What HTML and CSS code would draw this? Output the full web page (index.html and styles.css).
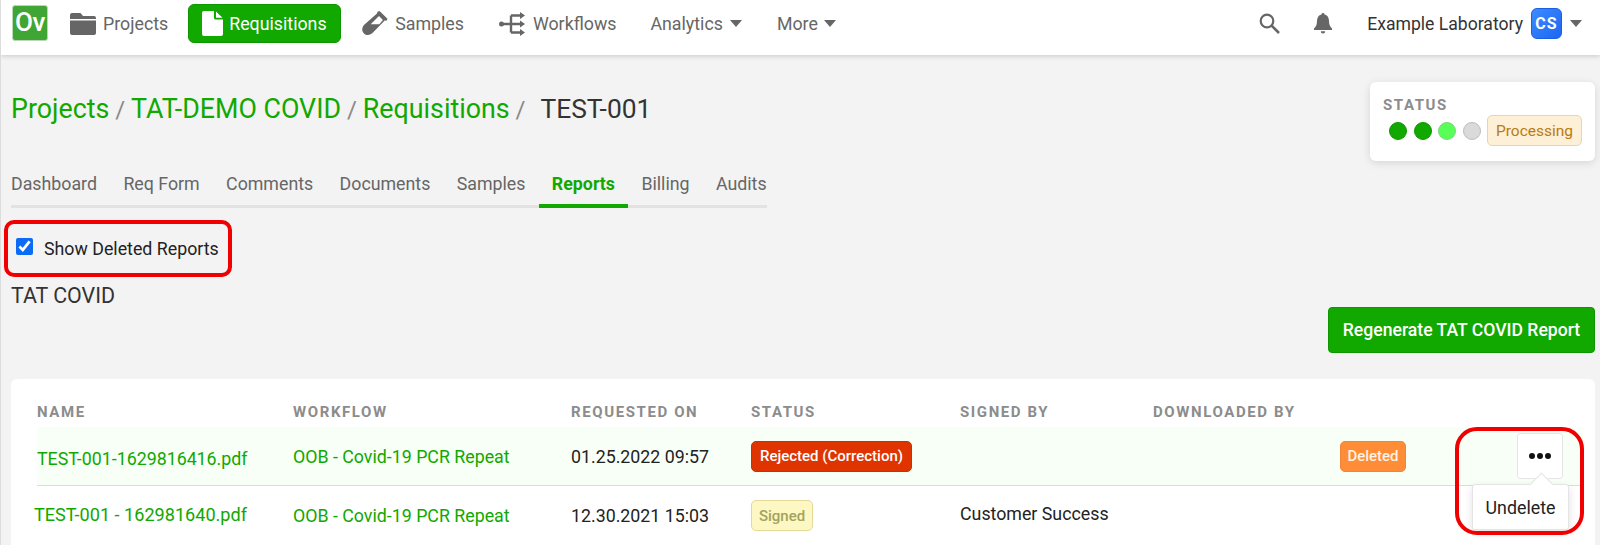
FILE: index.html
```html
<!DOCTYPE html>
<html lang="en">
<head>
<meta charset="utf-8">
<title>TEST-001 Reports</title>
<link rel="stylesheet" href="styles.css">
</head>
<body>
<div class="page">
  <nav class="nav">
    <div class="logo">Ov</div>
    <a class="nav-item nav-projects">
      <svg class="ic-folder" viewBox="0 0 26 22"><path d="M2 0h8.500l2.500 3h11a2 2 0 0 1 2 2v1H0V2a2 2 0 0 1 2-2zM0 7.500h26V20a2 2 0 0 1-2 2H2a2 2 0 0 1-2-2z"/></svg>
      <span>Projects</span>
    </a>
    <a class="nav-item nav-active">
      <svg class="ic-doc" viewBox="0 0 21 25"><path d="M2 0h10v7a1.500 1.500 0 0 0 1.500 1.500H21V23a2 2 0 0 1-2 2H2a2 2 0 0 1-2-2V2a2 2 0 0 1 2-2zM14 0.500L20.500 6.800H14z"/></svg>
      <span>Requisitions</span>
    </a>
    <a class="nav-item nav-samples">
      <svg class="ic-tube" viewBox="0 0 26 25"><path d="M15.500 0.800l2-0.800 8 7.800-1 2-1.800-0.300L11 21.500c-2.500 2.800-6.300 3.500-9 1-2.800-2.800-2-6.500 0.500-9L15 2.500zM17 5L8.700 13.300h8.600l3.600-4.400z"/></svg>
      <span>Samples</span>
    </a>
    <a class="nav-item nav-workflows">
      <svg class="ic-flow" viewBox="0 0 26 26"><circle cx="2.500" cy="13" r="2.500"/><path d="M2 13h21M12 4.500v17M12 4.500h10M12 21.500h10" fill="none" stroke="#666" stroke-width="2.400"/><path d="M21 1l5 3.500-5 3.500zM21 9.500l5 3.500-5 3.500zM21 18l5 3.500-5 3.500z"/></svg>
      <span>Workflows</span>
    </a>
    <a class="nav-item nav-analytics"><span>Analytics</span><i class="caret"></i></a>
    <a class="nav-item nav-more"><span>More</span><i class="caret"></i></a>
    <div class="nav-right">
      <svg class="ic-search" viewBox="0 0 21 21"><circle cx="8" cy="8" r="6.300" fill="none" stroke="#666" stroke-width="2.200"/><path d="M12.600 12.600L20 20" stroke="#666" stroke-width="2.600" fill="none"/></svg>
      <svg class="ic-bell" viewBox="0 0 18 21"><path d="M9 0a1.500 1.500 0 0 1 1.500 1.600C13.500 2.300 15 5 15 8c0 4 1 5.500 3 7.500V17H0v-1.500C2 13.500 3 12 3 8c0-3 1.500-5.700 4.500-6.400A1.500 1.500 0 0 1 9 0zM6.800 18.200h4.400a2.200 2.200 0 0 1-4.400 0z"/></svg>
      <span class="lab">Example Laboratory</span>
      <span class="avatar">CS</span>
      <i class="caret"></i>
    </div>
  </nav>

  <main class="main">
    <header class="head">
      <div class="crumbs">
        <a>Projects</a><span class="sep"> / </span><a>TAT-DEMO COVID</a><span class="sep"> / </span><a>Requisitions</a><span class="sep"> / </span><span class="crumb-current">TEST-001</span>
      </div>
      <aside class="status-card">
        <div class="status-label">STATUS</div>
        <div class="status-row">
          <i class="dot dot-done"></i><i class="dot dot-done"></i><i class="dot dot-now"></i><i class="dot dot-todo"></i>
          <span class="badge badge-processing">Processing</span>
        </div>
      </aside>
    </header>

    <div class="tabs">
      <a class="tab tab-first">Dashboard</a>
      <a class="tab">Req Form</a>
      <a class="tab">Comments</a>
      <a class="tab">Documents</a>
      <a class="tab">Samples</a>
      <a class="tab tab-active">Reports</a>
      <a class="tab">Billing</a>
      <a class="tab tab-last">Audits</a>
    </div>

    <label class="show-deleted"><input type="checkbox" checked><span>Show Deleted Reports</span></label>
    <h2 class="section-title">TAT COVID</h2>
    <div class="actions"><button class="btn-primary">Regenerate TAT COVID Report</button></div>

    <section class="card">
      <div class="grid grid-head">
        <span>NAME</span><span>WORKFLOW</span><span>REQUESTED ON</span><span>STATUS</span><span>SIGNED BY</span><span>DOWNLOADED BY</span>
      </div>
      <div class="grid row row-deleted">
        <a class="link name-a">TEST-001-1629816416.pdf</a>
        <a class="link">OOB - Covid-19 PCR Repeat</a>
        <span>01.25.2022 09:57</span>
        <span><span class="badge badge-rejected">Rejected (Correction)</span></span>
        <span></span>
        <span></span>
        <span><span class="badge badge-deleted">Deleted</span></span>
        <button class="more-btn"><i></i><i></i><i></i></button>
      </div>
      <div class="grid row">
        <a class="link name-b">TEST-001 - 162981640.pdf</a>
        <a class="link">OOB - Covid-19 PCR Repeat</a>
        <span>12.30.2021 15:03</span>
        <span><span class="badge badge-signed">Signed</span></span>
        <span class="lift">Customer Success</span>
        <span></span>
      </div>
    </section>
  </main>

  <div class="popover">Undelete</div>
  <div class="mark mark-check"></div>
  <div class="mark mark-menu"></div>
</div>
</body>
</html>
```
FILE: styles.css
```css
* { box-sizing: border-box; }
html, body { margin: 0; height: 100%; }
body {
  font-family: Roboto, "Liberation Sans", sans-serif;
  background: #f3f3f3;
  color: #222;
  overflow: hidden;
}
.page { position: relative; height: 545px; overflow: hidden; border-left: 1px solid #dcdcdc; }

/* top bar */
.nav {
  display: flex;
  align-items: center;
  height: 55px;
  background: #fff;
  box-shadow: 0 1px 5px rgba(0,0,0,.18);
  padding-left: 11px;
  font-size: 17.800px;
  color: #666;
  position: relative;
}
.logo {
  width: 36px; height: 36px;
  margin-top: -9px;
  background: #3fa535;
  border: 1px solid #b9d8b5;
  border-radius: 3px;
  color: #fff;
  font-size: 26px;
  font-weight: 500;
  line-height: 33px;
  text-align: center;
  letter-spacing: -.5px;
  overflow: hidden;
}
.nav-item { display: flex; align-items: center; height: 39px; margin-top: -8px; }
.nav-item svg { fill: #666; flex: none; }
.nav-projects { margin-left: 22px; gap: 7px; }
.ic-folder { width: 26px; height: 22px; }
.nav-active {
  margin-left: 20px;
  width: 153px;
  padding-left: 13px;
  gap: 6px;
  background: #11a800;
  border: 1px solid #0e9600;
  border-radius: 6px;
  color: #fff;
}
.nav-item.nav-active svg { fill: #fff; }
.ic-doc { width: 21px; height: 25px; }
.nav-samples { margin-left: 21px; gap: 7px; }
.ic-tube { width: 26px; height: 25px; }
.nav-workflows { margin-left: 35px; gap: 8px; }
.ic-flow { width: 26px; height: 26px; }
.nav-analytics { margin-left: 34px; gap: 7px; }
.nav-more { margin-left: 35px; gap: 6px; }
.caret {
  display: inline-block;
  width: 0; height: 0;
  border-left: 6.500px solid transparent;
  border-right: 6.500px solid transparent;
  border-top: 7px solid #666;
}
.nav-right { margin-left: auto; display: flex; align-items: center; height: 39px; margin-top: -8px; padding-right: 18px; }
.ic-search { width: 21px; height: 21px; }
.ic-bell { width: 18px; height: 21px; margin-left: 34px; fill: #666; }
.lab { margin-left: 35px; color: #333; font-size: 17.600px; }
.avatar {
  margin-left: 8px;
  width: 31px; height: 31px;
  border: 1px solid #1a5fe0;
  border-radius: 6px;
  background: linear-gradient(135deg, #3d8bff, #1c66f2);
  color: #fff;
  font-size: 16px;
  font-weight: 700;
  letter-spacing: 1px;
  line-height: 29px;
  text-align: center;
}
.nav-right .caret { margin-left: 8px; }

/* main */
.main { padding: 0 5px 0 10px; }
.head { display: flex; justify-content: space-between; align-items: flex-start; padding-top: 27px; height: 106px; }
.crumbs { padding-top: 11px; font-size: 26.800px; line-height: 32px; }
.crumbs a { color: #11a800; }
.sep { color: #8a8a8a; font-size: 24px; }
.crumb-current { color: #333; margin-left: 9px; font-size: 26.400px; }
.status-card {
  width: 225px; height: 79px;
  background: #fff;
  border-radius: 6px;
  box-shadow: 0 2px 8px rgba(0,0,0,.12);
  padding: 14px 13px;
}
.status-label, .grid-head {
  font-size: 15px;
  font-weight: 700;
  letter-spacing: 1.600px;
  color: #8c8c8c;
}
.status-label { line-height: 18px; }
.status-row { display: flex; align-items: center; margin-top: 1px; padding-left: 6px; gap: 6.500px; height: 31px; }
.dot { width: 18px; height: 18px; border-radius: 50%; flex: none; }
.dot-done { background: #11a800; border: 1px solid #0e9a00; }
.dot-now { background: #57ff57; border: 1px solid #7bd87b; }
.dot-todo { background: #dadada; border: 1px solid #bdbdbd; }

.badge {
  display: inline-flex;
  align-items: center;
  justify-content: center;
  height: 31px;
  border-radius: 5px;
  font-size: 15px;
  border: 1px solid transparent;
}
.badge-processing { width: 96px; background: #fdf0d6; border-color: #e8d6ab; color: #b87b12; font-size: 15.500px; }
.badge-rejected { width: 161px; background: #e03400; border-color: #c93000; color: #fff; font-weight: 500; }
.badge-deleted { width: 66px; background: #ff8c37; border-color: #f0853a; color: #fff3e6; font-weight: 500; }
.badge-signed { width: 62px; background: #fdf7c3; border-color: #e2da96; color: #a3a35c; font-weight: 500; }

/* tabs */
.tabs { display: flex; font-size: 17.800px; color: #666; width: max-content; }
.tab { padding: 11px 13.200px 9px; line-height: 24px; border-bottom: 3px solid #e2e2e2; }
.tab-first { padding-left: 0; }
.tab-last { padding-right: 0; }
.tab-active { color: #11a800; font-weight: 700; border-bottom: 4px solid #11a800; padding-bottom: 8px; }

.show-deleted { display: flex; align-items: center; margin: 28px 0 0 5px; height: 24px; font-size: 17.800px; color: #222; }
.show-deleted input { width: 17px; height: 17px; margin: 0 11px 4px 0; accent-color: #0b6bf5; }
.section-title { margin: 25px 0 0; font-size: 21.400px; font-weight: 400; line-height: 22px; color: #333; }
.actions { display: flex; justify-content: flex-end; }
.btn-primary {
  width: 267px; height: 46px;
  background: #11a800;
  border: 1px solid #0e9600;
  border-radius: 4px;
  color: #fff;
  font: 500 17.600px Roboto, sans-serif;
}

/* table */
.card { margin-top: 26px; background: #fff; border-radius: 6px 6px 0 0; padding: 23px 12px 0 26px; height: 166px; }
.grid { display: grid; grid-template-columns: 256px 278px 180px 209px 193px 187px 177px 46px; align-items: center; }
.grid-head { height: 20px; line-height: 20px; margin-bottom: 5px; grid-template-columns: 256px 278px 180px 209px 193px 187px; }
.row { height: 59px; font-size: 17.800px; color: #222; }
.row-deleted { background: #f7fff7; border-bottom: 1px solid #dcdcdc; }
.link { color: #11a800; }
.name-a { padding-top: 4px; }
.name-b { margin-left: -3px; margin-top: -3px; font-size: 18.100px; }
.lift { margin-top: -4px; }
.more-btn {
  display: flex; align-items: center; justify-content: center; gap: 2px;
  width: 46px; height: 46px;
  background: #fff;
  border: 1px solid #e6e6e6;
  border-radius: 3px;
  padding: 0;
}
.more-btn i { width: 6px; height: 6px; border-radius: 50%; background: #111; }

.popover {
  position: absolute;
  left: 1471px; top: 484px;
  width: 97px; height: 46px;
  background: #fff;
  border: 1px solid #e4e4e4;
  border-radius: 3px;
  box-shadow: 0 3px 8px rgba(0,0,0,.12);
  font-size: 17.800px;
  line-height: 46px;
  text-align: center;
  color: #222;
}
.popover::before {
  content: "";
  position: absolute;
  left: 60px; top: -9px;
  width: 16px; height: 16px;
  background: #fff;
  border-left: 1px solid #e4e4e4;
  border-top: 1px solid #e4e4e4;
  transform: rotate(45deg);
}
.mark { position: absolute; border: 4px solid #f00000; }
.mark-check { left: 3px; top: 220px; width: 228px; height: 57px; border-radius: 10px; }
.mark-menu { left: 1454px; top: 427px; width: 129px; height: 108px; border-radius: 22px; }
```
